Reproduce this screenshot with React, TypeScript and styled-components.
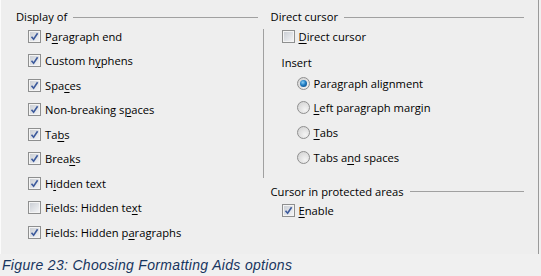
import React from "react";
import styled, { createGlobalStyle } from "styled-components";

const GlobalStyle = createGlobalStyle`
  html, body {
    margin: 0;
    padding: 0;
    background: #f0f0f0;
  }
  body {
    width: 541px;
    height: 276px;
    overflow: hidden;
    font-family: "Open Sans", "Noto Sans", sans-serif;
    font-size: 11.2px;
    color: #000;
  }
`;

const Dialog = styled.div`
  box-sizing: border-box;
  width: 539px;
  height: 254px;
  display: flex;
  background: #eeeeee;
  border-left: 1px solid #fbfbfb;
  border-right: 1px solid #9a9a9a;
`;

const Column = styled.div<{ $width: number; $padLeft: number; $padRight: number }>`
  box-sizing: border-box;
  width: ${(p) => p.$width}px;
  padding: 8px ${(p) => p.$padRight}px 0 ${(p) => p.$padLeft}px;
  display: flex;
  flex-direction: column;
`;

const Separator = styled.div`
  width: 1px;
  margin-top: 29px;
  height: 149px;
  background: #a0a0a0;
  flex-shrink: 0;
`;

const Heading = styled.div<{ $top?: number }>`
  display: flex;
  align-items: center;
  gap: 6px;
  height: 17px;
  margin-top: ${(p) => p.$top ?? 0}px;
  white-space: nowrap;

  &::after {
    content: "";
    flex: 1;
    height: 1px;
    background: #a0a0a0;
    margin-top: 1px;
  }
`;

const List = styled.div<{ $indent: number; $top: number; $gap: number }>`
  display: flex;
  flex-direction: column;
  gap: ${(p) => p.$gap}px;
  padding-left: ${(p) => p.$indent}px;
  margin-top: ${(p) => p.$top}px;
`;

const Row = styled.label`
  display: flex;
  align-items: center;
  gap: 4px;
  height: 14px;
  white-space: nowrap;
`;

const Label = styled.div<{ $indent: number; $top: number }>`
  padding-left: ${(p) => p.$indent}px;
  margin-top: ${(p) => p.$top}px;
  height: 14px;
  line-height: 14px;
`;

const Mn = styled.span`
  text-decoration: underline;
  text-underline-offset: 2px;
`;

const BoxFrame = styled.span`
  box-sizing: border-box;
  width: 13px;
  height: 13px;
  flex-shrink: 0;
  border: 1px solid #8e8f8f;
  padding: 1px;
  background: #f4f4f4;
  display: inline-flex;
`;

const BoxInner = styled.span`
  flex: 1;
  background: linear-gradient(135deg, #cbcfd5 0%, #f2f3f5 100%);
  position: relative;
  display: inline-block;
`;

const RadioRing = styled.span<{ $on: boolean }>`
  box-sizing: border-box;
  width: 13px;
  height: 13px;
  flex-shrink: 0;
  border-radius: 50%;
  border: 1px solid #8f8f8f;
  background: radial-gradient(circle at 65% 70%, #f4f4f4 0%, #cfcfcf 100%);
  display: inline-flex;
  align-items: center;
  justify-content: center;

  &::after {
    content: "";
    width: 7px;
    height: 7px;
    border-radius: 50%;
    display: ${(p) => (p.$on ? "block" : "none")};
    background: radial-gradient(circle at 40% 35%, #8cd0f7 0%, #1f7cc2 45%, #0b3f78 100%);
  }
`;

const Caption = styled.div`
  height: 22px;
  padding-left: 2px;
  font-family: "Liberation Sans", Arial, sans-serif;
  font-style: italic;
  font-size: 14px;
  letter-spacing: 0.32px;
  line-height: 22px;
  color: #17355e;
`;

const Check = () => (
  <svg width="9" height="9" viewBox="0 0 9 9" style={{ position: "absolute", left: 0, top: 0 }}>
    <path d="M1.5 4.8 L3.6 7.2 L7.6 1.2" fill="none" stroke="#3c5a9c" strokeWidth="1.6" />
  </svg>
);

const Checkbox: React.FC<{ checked?: boolean }> = ({ checked }) => (
  <BoxFrame>
    <BoxInner>{checked && <Check />}</BoxInner>
  </BoxFrame>
);

type Item = { pre: string; mn: string; post: string; on: boolean };

const displayItems: Item[] = [
  { pre: "P", mn: "a", post: "ragraph end", on: true },
  { pre: "Custom h", mn: "y", post: "phens", on: true },
  { pre: "Spa", mn: "c", post: "es", on: true },
  { pre: "Non-breaking s", mn: "p", post: "aces", on: true },
  { pre: "Ta", mn: "b", post: "s", on: true },
  { pre: "Brea", mn: "k", post: "s", on: true },
  { pre: "H", mn: "i", post: "dden text", on: true },
  { pre: "Fields: Hidden te", mn: "x", post: "t", on: false },
  { pre: "Fields: Hidden p", mn: "a", post: "ragraphs", on: true },
];

const insertItems: Item[] = [
  { pre: "Para", mn: "g", post: "raph alignment", on: true },
  { pre: "", mn: "L", post: "eft paragraph margin", on: false },
  { pre: "", mn: "T", post: "abs", on: false },
  { pre: "Tabs a", mn: "n", post: "d spaces", on: false },
];

const Text: React.FC<{ item: Item }> = ({ item }) => (
  <span>
    {item.pre}
    <Mn>{item.mn}</Mn>
    {item.post}
  </span>
);

export default function App() {
  return (
    <>
      <GlobalStyle />
      <Dialog>
        <Column $width={262} $padLeft={15} $padRight={5}>
          <Heading>Display of</Heading>
          <List $indent={12} $top={4} $gap={10.5}>
            {displayItems.map((it) => (
              <Row key={it.pre + it.mn}>
                <Checkbox checked={it.on} />
                <Text item={it} />
              </Row>
            ))}
          </List>
        </Column>
        <Separator />
        <Column $width={275} $padLeft={7} $padRight={14}>
          <Heading>Direct cursor</Heading>
          <List $indent={11} $top={4} $gap={0}>
            <Row>
              <Checkbox />
              <span>
                <Mn>D</Mn>irect cursor
              </span>
            </Row>
          </List>
          <Label $indent={11} $top={13}>Insert</Label>
          <List $indent={26} $top={6} $gap={10.7}>
            {insertItems.map((it) => (
              <Row key={it.pre + it.mn}>
                <RadioRing $on={it.on} />
                <Text item={it} />
              </Row>
            ))}
          </List>
          <Heading $top={18.5}>Cursor in protected areas</Heading>
          <List $indent={11} $top={4} $gap={0}>
            <Row>
              <Checkbox checked />
              <span>
                <Mn>E</Mn>nable
              </span>
            </Row>
          </List>
        </Column>
      </Dialog>
      <Caption>Figure 23: Choosing Formatting Aids options</Caption>
    </>
  );
}
